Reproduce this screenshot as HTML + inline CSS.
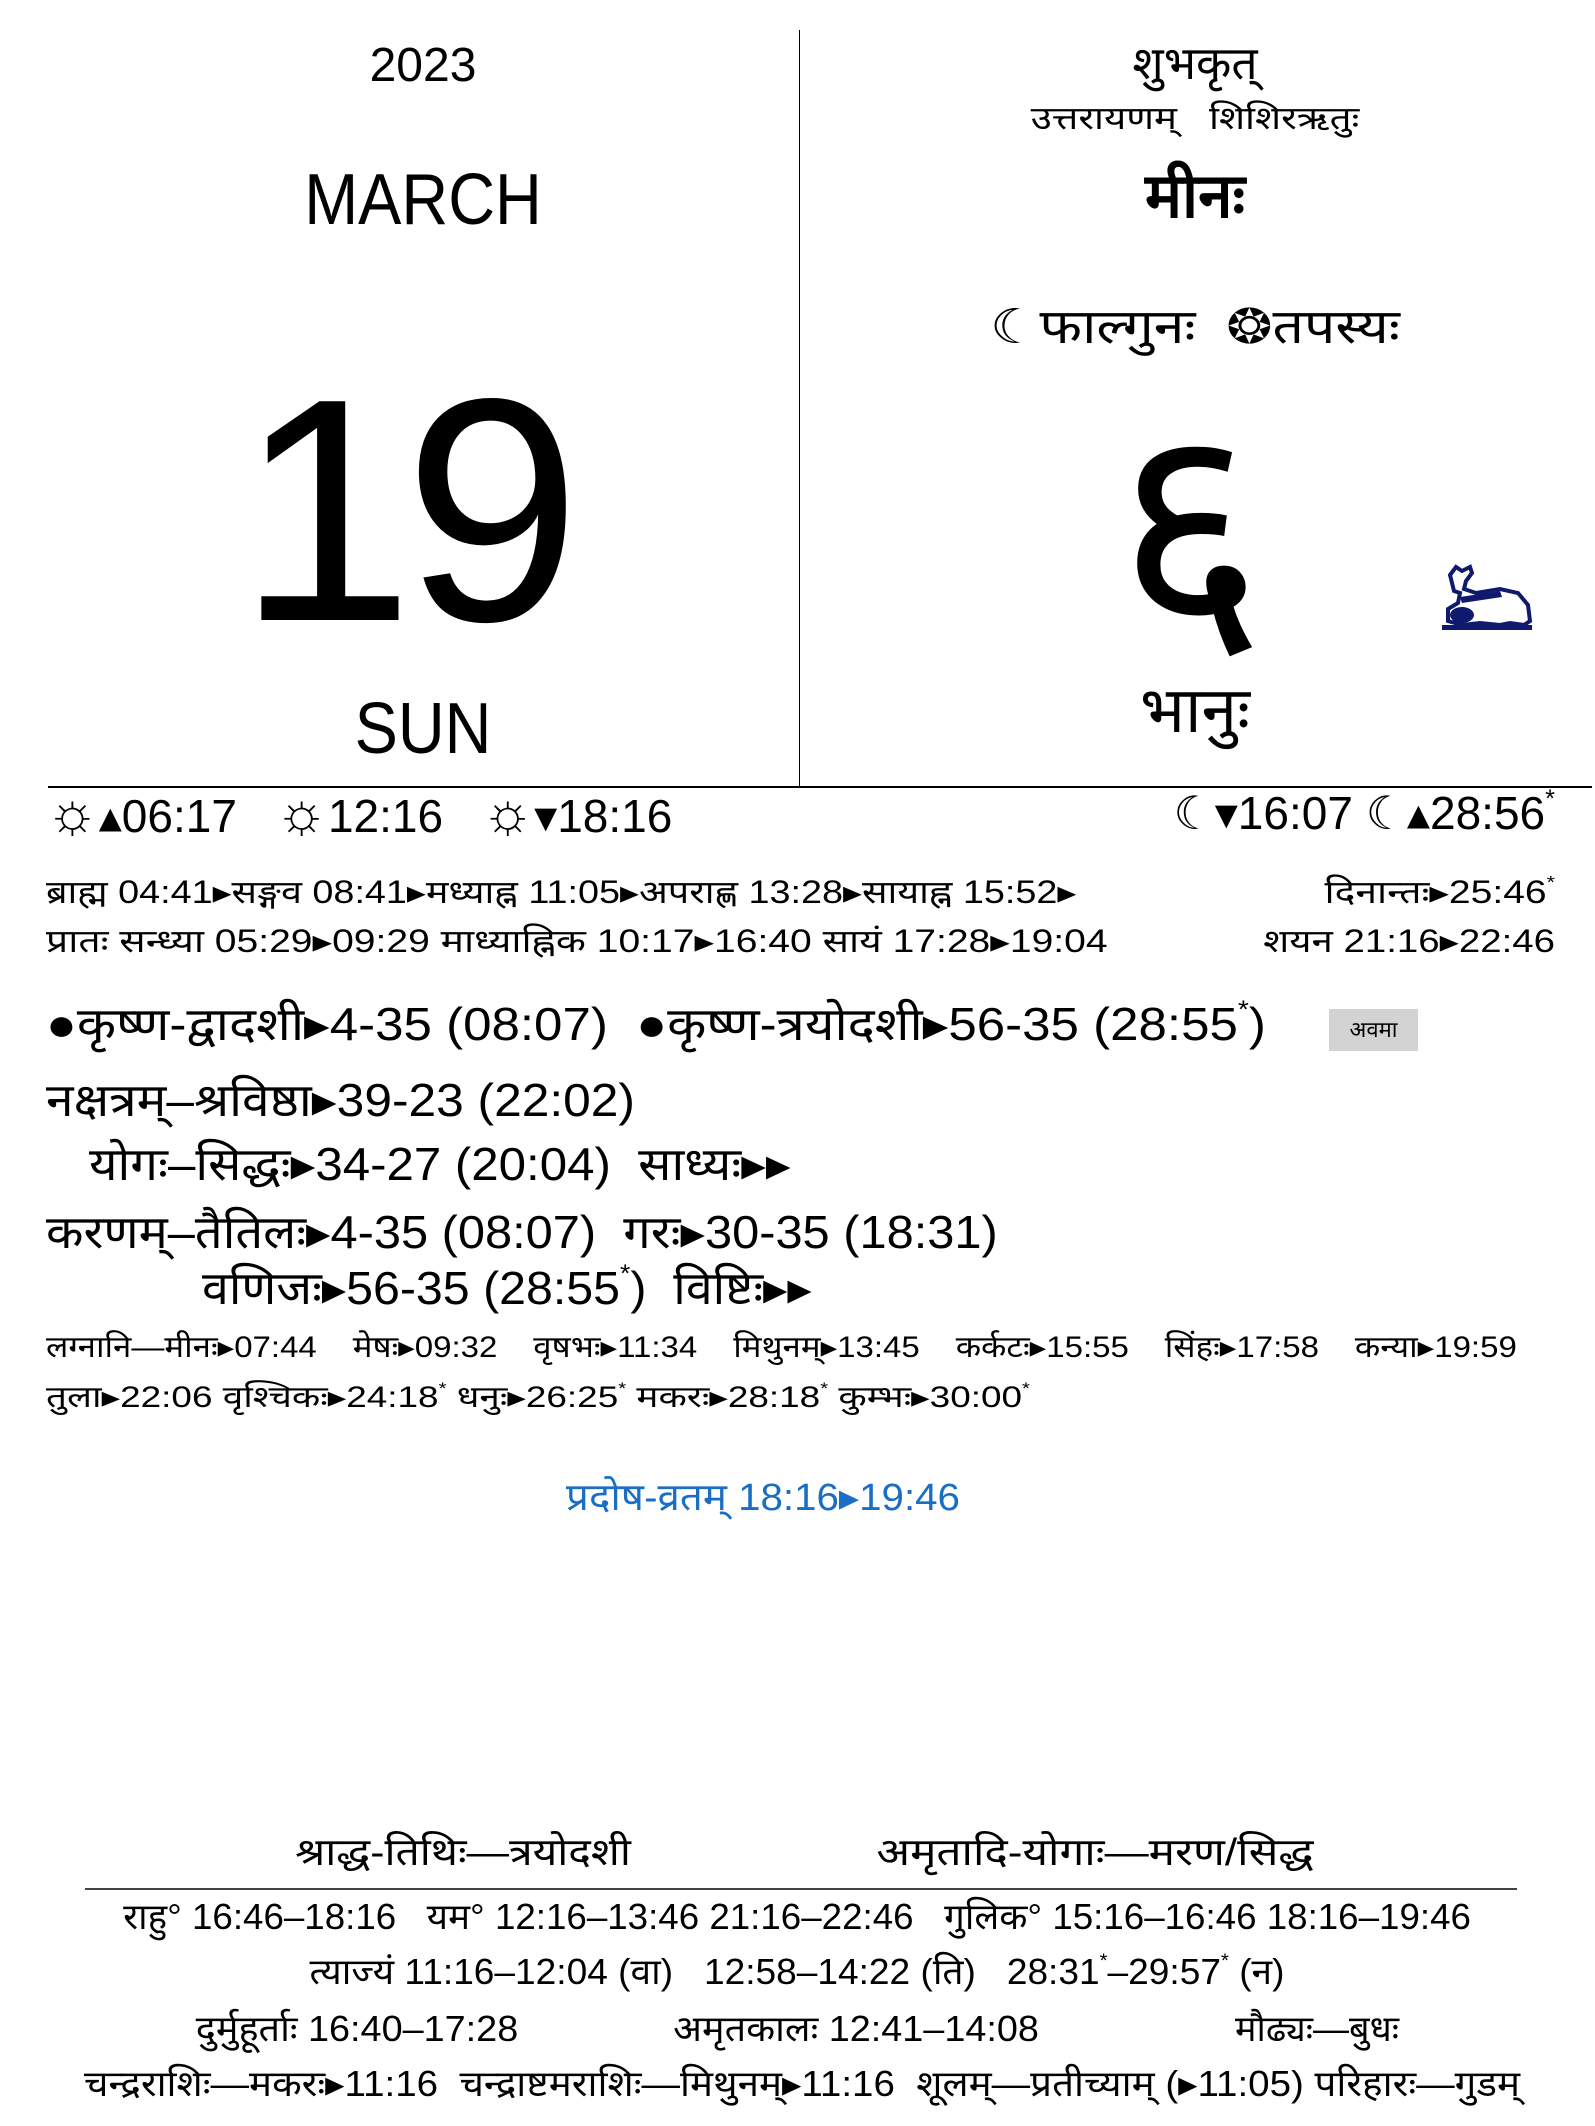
<!DOCTYPE html>
<html><head><meta charset="utf-8"><style>
html,body{margin:0;padding:0;background:#fff;}
body{width:1595px;height:2126px;position:relative;overflow:hidden;font-family:"Liberation Sans","DejaVu Sans",sans-serif;color:#000;}
.t{position:absolute;white-space:nowrap;line-height:1;transform-origin:left center;}
.c{transform-origin:center center;}
.r{transform-origin:right center;}
sup{font-size:55%;vertical-align:top;position:relative;top:-0.1em;}
.s{font-size:1.25em;line-height:0.8;}
</style></head><body>
<div style="position:absolute;left:799px;top:30px;width:1px;height:756px;background:#000"></div>
<div style="position:absolute;left:48px;top:786px;width:1544px;height:2px;background:#000"></div>

<div class="t c" style="left:423px;top:42px;font-size:48px;transform:translateX(-50%)">2023</div>
<div class="t c" style="left:423px;top:164px;font-size:72px;transform:translateX(-50%) scaleX(0.9)">MARCH</div>
<div class="t c" style="left:404px;top:352px;font-size:318px;letter-spacing:-10px;transform:translateX(-50%)">19</div>
<div class="t c" style="left:423px;top:693px;font-size:72px;transform:translateX(-50%) scaleX(0.9)">SUN</div>

<div class="t c" style="left:1195px;top:40px;font-size:46px;transform:translateX(-50%)">शुभकृत्</div>
<div class="t c" style="left:1195px;top:102px;font-size:32px;transform:translateX(-50%) scaleX(1.2)">उत्तरायणम् &nbsp; शिशिरऋतुः</div>
<div class="t c" style="left:1195px;top:166px;font-size:62px;font-weight:bold;transform:translateX(-50%)">मीनः</div>
<div class="t c" style="left:1195px;top:304px;font-size:48px;transform:translateX(-50%) scaleX(1.15)">☾फाल्गुनः &nbsp;❂तपस्यः</div>
<div class="t c" style="left:1190px;top:385px;font-size:290px;transform:translateX(-50%)">६</div>
<div class="t c" style="left:1195px;top:678px;font-size:64px;transform:translateX(-50%)">भानुः</div>

<svg style="position:absolute;left:1440px;top:563px" width="95" height="70" viewBox="0 0 95 70">
<g fill="#0f1a6e">
<path d="M10 12 L16 4 L22 8 L30 4 L32 10 L26 18 L24 26 L36 30 L60 26 L78 30 L88 42 L90 58 L84 62 L70 60 L60 62 L40 60 L22 62 L8 58 L8 46 L18 40 L20 30 L14 28 Z" fill="none" stroke="#0f1a6e" stroke-width="4"/>
<path d="M20 34 L60 28 L62 34 L22 40 Z"/>
<ellipse cx="22" cy="52" rx="12" ry="8"/>
<rect x="2" y="62" width="90" height="5"/>
</g></svg>

<div class="t" style="left:46px;top:790px;font-size:46px"><span class="s">☼</span>▴06:17 &nbsp; <span class="s">☼</span>12:16 &nbsp; <span class="s">☼</span>▾18:16</div>
<div class="t r" style="left:1555px;top:790px;font-size:46px;transform:translateX(-100%)">☾▾16:07 ☾▴28:56<sup>*</sup></div>

<div class="t" style="left:46px;top:876px;font-size:32px;transform:scaleX(1.18)">ब्राह्म 04:41▸सङ्गव 08:41▸मध्याह्न 11:05▸अपराह्ण 13:28▸सायाह्न 15:52▸</div>
<div class="t r" style="left:1555px;top:876px;font-size:32px;transform:translateX(-100%) scaleX(1.22)">दिनान्तः▸25:46<sup>*</sup></div>
<div class="t" style="left:46px;top:925px;font-size:32px;transform:scaleX(1.22)">प्रातः सन्ध्या 05:29▸09:29 माध्याह्निक 10:17▸16:40 सायं 17:28▸19:04</div>
<div class="t r" style="left:1555px;top:925px;font-size:32px;transform:translateX(-100%) scaleX(1.2)">शयन 21:16▸22:46</div>

<div class="t" style="left:46px;top:1001px;font-size:46px;transform:scaleX(1.11)">●कृष्ण-द्वादशी▸4-35 (08:07) &nbsp;●कृष्ण-त्रयोदशी▸56-35 (28:55<sup>*</sup>)</div>
<div style="position:absolute;left:1329px;top:1009px;width:89px;height:42px;background:#d3d3d3;font-size:22px;line-height:42px;text-align:center">अवमा</div>
<div class="t" style="left:46px;top:1077px;font-size:46px;transform:scaleX(1.08)">नक्षत्रम्–श्रविष्ठा▸39-23 (22:02)</div>
<div class="t" style="left:89px;top:1141px;font-size:46px;transform:scaleX(1.07)">योगः–सिद्धः▸34-27 (20:04) &nbsp;साध्यः▸▸</div>
<div class="t" style="left:46px;top:1209px;font-size:46px;transform:scaleX(1.06)">करणम्–तैतिलः▸4-35 (08:07) &nbsp;गरः▸30-35 (18:31)</div>
<div class="t" style="left:202px;top:1265px;font-size:46px;transform:scaleX(1.05)">वणिजः▸56-35 (28:55<sup>*</sup>) &nbsp;विष्टिः▸▸</div>

<div class="t" style="left:46px;top:1333px;font-size:30px;word-spacing:8px;transform:scaleX(1.1)">लग्नानि—मीनः▸07:44 &nbsp;मेषः▸09:32 &nbsp;वृषभः▸11:34 &nbsp;मिथुनम्▸13:45 &nbsp;कर्कटः▸15:55 &nbsp;सिंहः▸17:58 &nbsp;कन्या▸19:59</div>
<div class="t" style="left:46px;top:1383px;font-size:30px;transform:scaleX(1.23)">तुला▸22:06 वृश्चिकः▸24:18<sup>*</sup> धनुः▸26:25<sup>*</sup> मकरः▸28:18<sup>*</sup> कुम्भः▸30:00<sup>*</sup></div>

<div class="t c" style="left:763px;top:1479px;font-size:38px;color:#1a6fc4;transform:translateX(-50%) scaleX(1.06)">प्रदोष-व्रतम् 18:16▸19:46</div>

<div class="t c" style="left:463px;top:1834px;font-size:38px;transform:translateX(-50%) scaleX(1.12)">श्राद्ध-तिथिः—त्रयोदशी</div>
<div class="t c" style="left:1095px;top:1834px;font-size:38px;transform:translateX(-50%) scaleX(1.16)">अमृतादि-योगाः—मरण/सिद्ध</div>
<div style="position:absolute;left:85px;top:1888px;width:1432px;height:2px;background:#444"></div>
<div class="t c" style="left:797px;top:1899px;font-size:36px;transform:translateX(-50%) scaleX(1.02)">राहु° 16:46–18:16 &nbsp; यम° 12:16–13:46 21:16–22:46 &nbsp; गुलिक° 15:16–16:46 18:16–19:46</div>
<div class="t c" style="left:797px;top:1954px;font-size:36px;transform:translateX(-50%) scaleX(1.03)">त्याज्यं 11:16–12:04 (वा) &nbsp; 12:58–14:22 (ति) &nbsp; 28:31<sup>*</sup>–29:57<sup>*</sup> (न)</div>
<div class="t c" style="left:357px;top:2011px;font-size:36px;transform:translateX(-50%) scaleX(1.05)">दुर्मुहूर्ताः 16:40–17:28</div>
<div class="t c" style="left:856px;top:2011px;font-size:36px;transform:translateX(-50%) scaleX(1.05)">अमृतकालः 12:41–14:08</div>
<div class="t c" style="left:1317px;top:2011px;font-size:36px;transform:translateX(-50%)">मौढ्यः—बुधः</div>
<div class="t c" style="left:802px;top:2066px;font-size:36px;transform:translateX(-50%) scaleX(1.07)">चन्द्रराशिः—मकरः▸11:16 &nbsp;चन्द्राष्टमराशिः—मिथुनम्▸11:16 &nbsp;शूलम्—प्रतीच्याम् (▸11:05) परिहारः—गुडम्</div>
</body></html>
